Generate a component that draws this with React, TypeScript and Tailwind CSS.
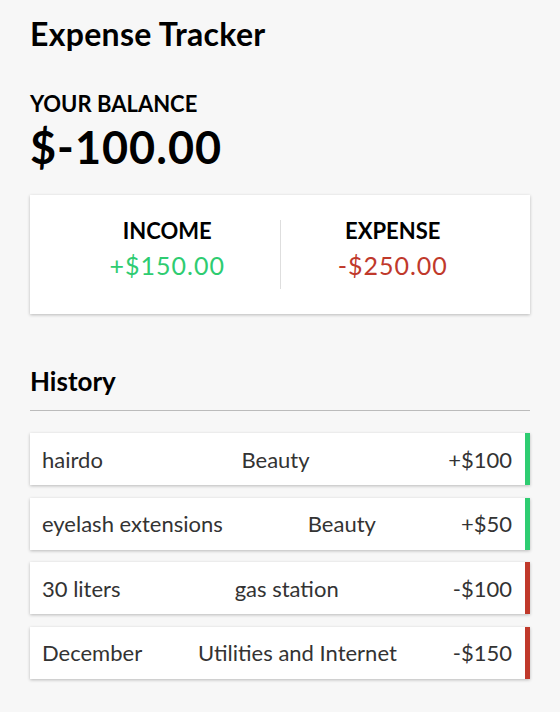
import React from 'react';

interface Txn {
  id: number;
  text: string;
  category: string;
  amount: number;
}

const transactions: Txn[] = [
  { id: 1, text: 'hairdo', category: 'Beauty', amount: 100 },
  { id: 2, text: 'eyelash extensions', category: 'Beauty', amount: 50 },
  { id: 3, text: '30 liters', category: 'gas station', amount: -100 },
  { id: 4, text: 'December', category: 'Utilities and Internet', amount: -150 },
];

const App: React.FC = () => {
  const total = transactions.reduce((s, t) => s + t.amount, 0);
  const income = transactions.filter((t) => t.amount > 0).reduce((s, t) => s + t.amount, 0);
  const expense = transactions.filter((t) => t.amount < 0).reduce((s, t) => s - t.amount, 0);

  return (
    <div className="min-h-[712px] bg-[#f7f7f7] text-black font-['Lato',sans-serif]">
      <div className="w-[500px] ml-[30px] pt-[13px]">
        <h2 className="text-[32px] font-bold leading-[42px] tracking-[0.3px]">Expense Tracker</h2>

        <h4 className="mt-[35px] text-[22px] font-bold uppercase leading-[28px]">Your Balance</h4>
        <h1 className="mt-[4px] text-[45px] font-bold leading-[50px] tracking-[1px]">${total.toFixed(2)}</h1>

        <div className="mt-[23px] flex bg-white px-[25px] py-[25px] shadow-[0_1px_3px_rgba(0,0,0,0.25)]">
          <div className="flex-1 text-center border-r border-[#dedede]">
            <h4 className="text-[22px] font-bold uppercase leading-[22px]">Income</h4>
            <p className="text-[25px] leading-[47px] tracking-[1px] text-[#2ecc71]">+${income.toFixed(2)}</p>
          </div>
          <div className="flex-1 text-center">
            <h4 className="text-[22px] font-bold uppercase leading-[22px]">Expense</h4>
            <p className="text-[25px] leading-[47px] tracking-[1px] text-[#c0392b]">-${expense.toFixed(2)}</p>
          </div>
        </div>

        <h3 className="mt-[50px] pb-[12px] text-[26px] font-bold leading-[34px] border-b border-[#bbb]">History</h3>

        <ul className="mt-[22px] flex flex-col gap-[12.6px]">
          {transactions.map((t) => (
            <li
              key={t.id}
              className={`flex items-center justify-between h-[52px] bg-white pl-[12px] pr-[13px] text-[22px] text-[#333] shadow-[0_1px_3px_rgba(0,0,0,0.25)] border-r-[5px] ${
                t.amount > 0 ? 'border-[#2ecc71]' : 'border-[#c0392b]'
              }`}
            >
              <span>{t.text}</span>
              <span>{t.category}</span>
              <span>
                {t.amount > 0 ? '+' : '-'}${Math.abs(t.amount)}
              </span>
            </li>
          ))}
        </ul>
      </div>
    </div>
  );
};

export default App;
